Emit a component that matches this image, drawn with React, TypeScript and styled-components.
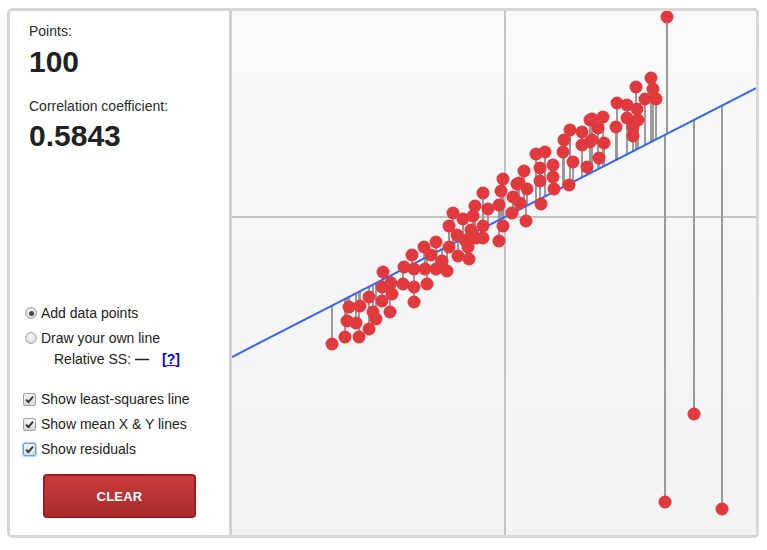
import { useState } from "react";
import styled, { createGlobalStyle } from "styled-components";

const GlobalStyle = createGlobalStyle`
  body {
    margin: 0;
    background: #ffffff;
    font-family: "Liberation Sans", Arial, sans-serif;
    color: #262626;
  }
`;

const PLOT = 524;
const OFFSET_X = 232;
const OFFSET_Y = 11;
const MEAN_X = 273;
const MEAN_Y = 206;

// least-squares line, in plot coordinates
const lineY = (x: number) => 346 - 0.5133 * x;

// page coordinates read off the picture
const POINTS: [number, number][] = [
  [332, 344], [345, 337], [359, 337], [369, 329], [347, 321], [356, 323],
  [376, 319], [373, 312], [349, 307], [360, 306], [369, 297], [382, 301],
  [390, 312], [392, 294], [382, 287], [391, 283], [383, 272], [403, 284],
  [414, 302], [414, 287], [427, 284], [404, 267], [412, 255], [414, 269],
  [425, 269], [431, 255], [436, 269], [442, 261], [447, 271], [424, 247],
  [436, 242], [449, 247], [458, 256], [469, 259], [468, 247], [457, 235],
  [465, 240], [476, 238], [483, 238], [499, 241], [471, 230], [449, 226],
  [483, 226], [503, 226], [463, 219], [473, 216], [453, 213], [488, 209],
  [475, 206], [499, 205], [512, 213], [483, 193], [501, 191], [513, 197],
  [503, 179], [517, 184], [520, 203], [526, 221], [541, 204], [527, 189],
  [519, 183], [540, 181], [554, 189], [553, 177], [524, 171], [540, 168],
  [553, 165], [569, 185], [573, 162], [587, 167], [536, 154], [545, 152],
  [563, 152], [564, 140], [570, 130], [582, 132], [582, 145], [590, 120],
  [590, 142], [599, 158], [604, 143], [592, 140], [598, 128], [592, 119],
  [603, 117], [616, 127], [633, 127], [633, 136], [617, 103], [627, 105],
  [637, 109], [627, 118], [638, 120], [636, 87], [645, 99], [656, 99],
  [653, 89], [651, 78], [667, 17], [665, 502], [694, 414], [722, 509],
];

const Frame = styled.div`
  margin: 8px 0 0 7px;
  width: 752px;
  height: 530px;
  box-sizing: border-box;
  border: 3px solid #d7d7d7;
  border-radius: 5px;
  display: grid;
  grid-template-columns: 222px 1fr;
  overflow: hidden;
`;

const Panel = styled.div`
  box-sizing: border-box;
  border-right: 3px solid #d2d2d2;
  background: #ffffff;
  padding: 12px 0 0 19px;
  display: flex;
  flex-direction: column;
`;

const Label = styled.div<{ $gap?: number }>`
  font-size: 14px;
  line-height: 16px;
  margin-top: ${(p) => p.$gap ?? 0}px;
  color: #2a2a2a;
`;

const BigNumber = styled.div<{ $gap: number }>`
  font-size: 30px;
  line-height: 34px;
  font-weight: bold;
  margin-top: ${(p) => p.$gap}px;
  color: #222222;
`;

const Options = styled.div`
  margin-top: 152px;
  margin-left: -6px;
  display: flex;
  flex-direction: column;
`;

const Row = styled.label<{ $gap: number }>`
  display: flex;
  align-items: center;
  height: 16px;
  margin-top: ${(p) => p.$gap}px;
  font-size: 14px;
  line-height: 16px;
  color: #222222;
  cursor: pointer;
`;

const RadioDot = styled.span<{ $on: boolean }>`
  width: 12px;
  height: 12px;
  box-sizing: border-box;
  margin: 0 4px 0 2px;
  border-radius: 50%;
  border: 1px solid #a5a5a5;
  background: radial-gradient(circle at 50% 35%, #f6f6f6 0%, #d2d2d2 100%);
  display: flex;
  align-items: center;
  justify-content: center;

  &::after {
    content: "";
    width: 5px;
    height: 5px;
    border-radius: 50%;
    background: ${(p) => (p.$on ? "#4a4a4a" : "transparent")};
  }
`;

const CheckBox = styled.span<{ $focus?: boolean }>`
  width: 13px;
  height: 13px;
  box-sizing: border-box;
  margin-right: 5px;
  border-radius: 2px;
  border: 1px solid ${(p) => (p.$focus ? "#6f9be3" : "#9e9e9e")};
  box-shadow: ${(p) => (p.$focus ? "0 0 0 1px #b9d0f5" : "none")};
  background: linear-gradient(#f4f4f4, #d9d9d9);
  display: flex;
  align-items: center;
  justify-content: center;
`;

const SubRow = styled.div`
  display: flex;
  align-items: center;
  height: 16px;
  margin: 5px 0 0 31px;
  font-size: 14px;
  line-height: 16px;
  color: #222222;
`;

const Dash = styled.span`
  margin-left: 4px;
  font-weight: bold;
`;

const Help = styled.a`
  margin-left: 13px;
  font-weight: bold;
  color: #0000ee;
  text-decoration: none;

  span {
    text-decoration: underline;
  }
`;

const ClearButton = styled.button`
  margin: 17px 0 0 14px;
  width: 153px;
  height: 44px;
  box-sizing: border-box;
  border: 2px solid #a3191c;
  border-radius: 4px;
  background: linear-gradient(#cc3b3d, #a92a2c);
  color: #ffffff;
  font-family: "Liberation Sans", Arial, sans-serif;
  font-size: 13px;
  font-weight: bold;
  letter-spacing: 0.2px;
  cursor: pointer;
`;

const Plot = styled.div`
  background: linear-gradient(#f8f9fb, #f1f2f4);
  width: ${PLOT}px;
  height: ${PLOT}px;
`;

function Check() {
  return (
    <svg width="9" height="9" viewBox="0 0 9 9">
      <path d="M1 4.6 L3.4 7 L8 1.6" fill="none" stroke="#333" strokeWidth="1.9" />
    </svg>
  );
}

function Scatter() {
  const pts = POINTS.map(([x, y]) => [x - OFFSET_X, y - OFFSET_Y]);
  return (
    <svg width={PLOT} height={PLOT} viewBox={`0 0 ${PLOT} ${PLOT}`}>
      <line x1={MEAN_X} y1={0} x2={MEAN_X} y2={PLOT} stroke="#c3c3c3" strokeWidth={2} />
      <line x1={0} y1={MEAN_Y} x2={PLOT} y2={MEAN_Y} stroke="#c3c3c3" strokeWidth={2} />
      {pts.map(([x, y], i) => (
        <line key={"r" + i} x1={x} y1={y} x2={x} y2={lineY(x)} stroke="#999999" strokeWidth={2} />
      ))}
      <line x1={0} y1={lineY(0)} x2={PLOT} y2={lineY(PLOT)} stroke="#3862f0" strokeWidth={2} />
      {pts.map(([x, y], i) => (
        <circle key={"p" + i} cx={x} cy={y} r={6.5} fill="#e13a3e" />
      ))}
    </svg>
  );
}

export default function App() {
  const [mode, setMode] = useState<"add" | "draw">("add");
  const [opts, setOpts] = useState({ lsq: true, mean: true, resid: true });

  const toggle = (k: keyof typeof opts) => setOpts({ ...opts, [k]: !opts[k] });

  return (
    <>
      <GlobalStyle />
      <Frame>
        <Panel>
          <Label>Points:</Label>
          <BigNumber $gap={6}>100</BigNumber>
          <Label $gap={19}>Correlation coefficient:</Label>
          <BigNumber $gap={5}>0.5843</BigNumber>
          <Options>
            <Row $gap={0} onClick={() => setMode("add")}>
              <RadioDot $on={mode === "add"} />
              Add data points
            </Row>
            <Row $gap={9} onClick={() => setMode("draw")}>
              <RadioDot $on={mode === "draw"} />
              Draw your own line
            </Row>
            <SubRow>
              Relative SS:<Dash>—</Dash>
              <Help href="#">
                [<span>?</span>]
              </Help>
            </SubRow>
            <Row $gap={24} onClick={() => toggle("lsq")}>
              <CheckBox>{opts.lsq && <Check />}</CheckBox>
              Show least-squares line
            </Row>
            <Row $gap={9} onClick={() => toggle("mean")}>
              <CheckBox>{opts.mean && <Check />}</CheckBox>
              Show mean X &amp; Y lines
            </Row>
            <Row $gap={9} onClick={() => toggle("resid")}>
              <CheckBox $focus>{opts.resid && <Check />}</CheckBox>
              Show residuals
            </Row>
          </Options>
          <ClearButton>CLEAR</ClearButton>
        </Panel>
        <Plot>
          <Scatter />
        </Plot>
      </Frame>
    </>
  );
}
